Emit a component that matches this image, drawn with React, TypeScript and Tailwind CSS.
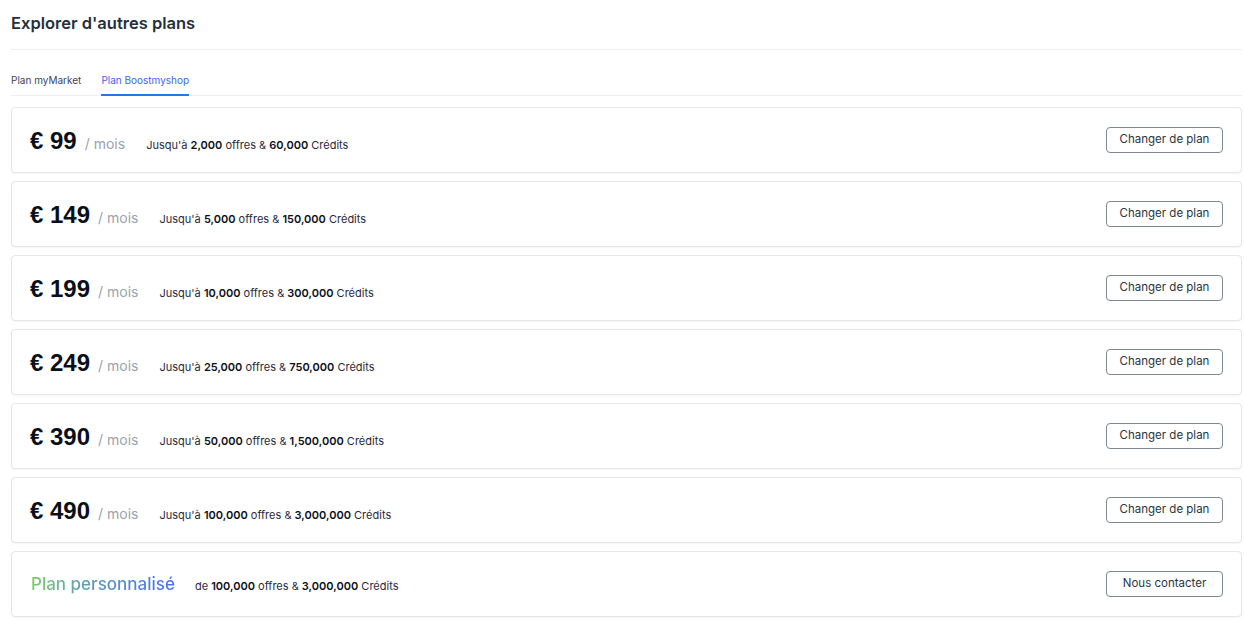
import React from "react";

const plans = [
  { price: "99", offers: "2,000", credits: "60,000" },
  { price: "149", offers: "5,000", credits: "150,000" },
  { price: "199", offers: "10,000", credits: "300,000" },
  { price: "249", offers: "25,000", credits: "750,000" },
  { price: "390", offers: "50,000", credits: "1,500,000" },
  { price: "490", offers: "100,000", credits: "3,000,000" },
];

const font = { fontFamily: "Inter, 'Noto Sans', sans-serif" };

function Button({ label }: { label: string }) {
  return (
    <button className="h-[26px] w-[117px] rounded-[4px] border border-[#7d8893] bg-white text-[11.5px] text-[#2b3440] flex items-center justify-center">
      {label}
    </button>
  );
}

export default function App() {
  return (
    <div className="min-h-[620px] w-full bg-white pl-[11px] pr-[2px] pt-[12px] text-[#2b3440]" style={font}>
      <div className="border-b border-[#eceef1] pb-[15px]">
        <h1 className="text-[16.5px] leading-[22px] font-semibold text-[#24303c]">Explorer d'autres plans</h1>
      </div>
      <div className="mt-[23px] flex gap-[20px] border-b border-[#eceef1] text-[10px] leading-[14px]">
        <div className="pb-[8px] text-[#40455a]">Plan myMarket</div>
        <div className="-mb-px border-b-2 border-[#1f78f0] pb-[7px] text-[#4463ee]">Plan Boostmyshop</div>
      </div>
      <div className="mt-[11px] flex flex-col gap-[8px]">
        {plans.map((p) => (
          <div
            key={p.price}
            className="flex h-[66px] items-center justify-between rounded-[4px] border border-[#e3e6ea] bg-white pl-[18px] pr-[18px] shadow-[0_1px_2px_rgba(0,0,0,0.04)]"
          >
            <div className="flex items-baseline pt-[1px]">
              <span className="text-[24px] font-bold text-[#0b0f19]" style={{ fontFamily: "'Liberation Sans', Arial, sans-serif" }}>
                € {p.price}
              </span>
              <span className="ml-[8px] text-[14px] text-[#9aa3ae]">/ mois</span>
              <span className="ml-[21px] text-[11px] text-[#2a2838]">
                Jusqu'à <b className="font-semibold text-[#0b0f19]">{p.offers}</b> offres &amp;{" "}
                <b className="font-semibold text-[#0b0f19]">{p.credits}</b> Crédits
              </span>
            </div>
            <Button label="Changer de plan" />
          </div>
        ))}
        <div className="flex h-[66px] items-center justify-between rounded-[4px] border border-[#e3e6ea] bg-white pl-[19px] pr-[18px] shadow-[0_1px_2px_rgba(0,0,0,0.04)]">
          <div className="flex items-baseline pt-[2px]">
            <span className="bg-gradient-to-r from-[#7ccb5c] via-[#5e9ab8] via-40% to-[#4b6ff4] bg-clip-text text-[17px] font-medium text-transparent">
              Plan personnalisé
            </span>
            <span className="ml-[20px] text-[11px] text-[#2a2838]">
              de <b className="font-semibold text-[#0b0f19]">100,000</b> offres &amp;{" "}
              <b className="font-semibold text-[#0b0f19]">3,000,000</b> Crédits
            </span>
          </div>
          <Button label="Nous contacter" />
        </div>
      </div>
    </div>
  );
}
